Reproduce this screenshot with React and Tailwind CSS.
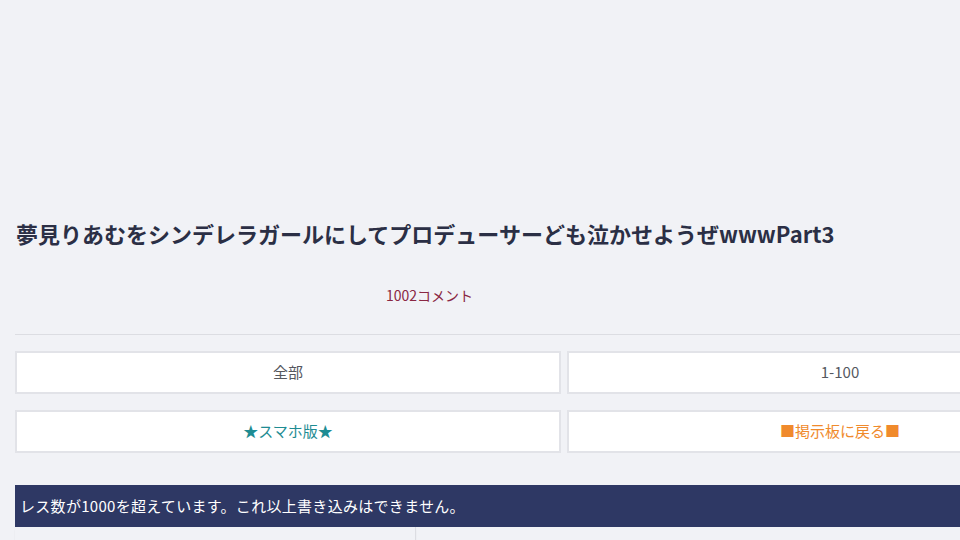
import React from 'react';

const font = { fontFamily: '"Noto Sans CJK JP", "Noto Sans", sans-serif' };

function NavButton({ children, className = '' }) {
  return (
    <a className={`flex h-[43px] items-center justify-center border-2 border-[#e2e3e8] bg-white text-[15px] ${className}`}>
      {children}
    </a>
  );
}

export default function App() {
  return (
    <div className="h-[540px] w-[960px] overflow-hidden bg-[#f1f2f6]" style={font}>
      <div className="w-[1113px] pl-[15px] pt-[216px]">
        <h1 className="pl-[1px] text-[22px] font-bold leading-[34px] text-[#2b2f45]">
          夢見りあむをシンデレラガールにしてプロデューサーども泣かせようぜwwwPart3
        </h1>
        <div className="mt-[35px] pl-[371px] text-[14px] leading-[20px] text-[#8a2743]">1002コメント</div>
        <div className="mt-[29px] border-t border-[#dcdde2]" />
        <div className="mt-[16px] grid grid-cols-2 gap-x-[6px] gap-y-[16px]">
          <NavButton className="text-[#55585f]">全部</NavButton>
          <NavButton className="text-[#55585f]">1-100</NavButton>
          <NavButton className="text-[#1e8c93]">★スマホ版★</NavButton>
          <NavButton className="text-[#f08a2c]">■掲示板に戻る■</NavButton>
        </div>
        <div className="mt-[32px] flex h-[42px] items-center bg-[#2e3864] pl-[5px] text-[15px] tracking-[0.3px] text-white">
          レス数が1000を超えています。これ以上書き込みはできません。
        </div>
        <div className="flex">
          <div className="h-[13px] w-[401px] border-r border-[#dcdde2] shadow-[0_2px_2px_rgba(0,0,0,0.05)]" />
        </div>
      </div>
    </div>
  );
}
